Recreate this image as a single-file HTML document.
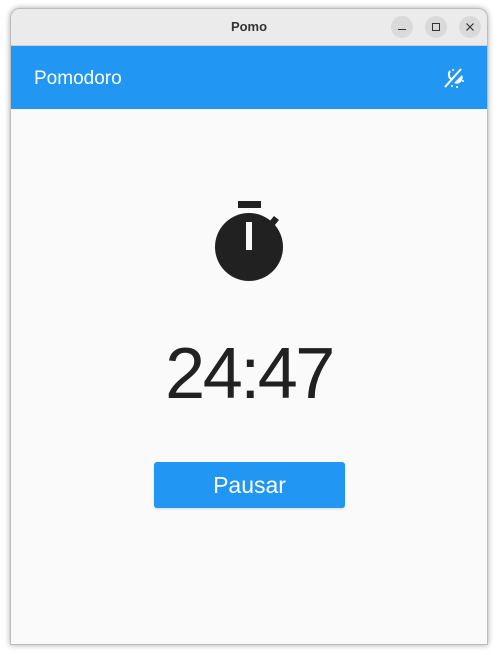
<!DOCTYPE html>
<html><head><style>
html,body{margin:0;padding:0;width:498px;height:655px;background:#fff;overflow:hidden;font-family:"Liberation Sans",sans-serif}
.win{position:absolute;left:10px;top:8px;width:478px;height:637px;border-radius:10px 10px 0 0;overflow:hidden;background:#fafafa;box-shadow:0 0 6px rgba(0,0,0,.35);border:1px solid #bdbdbd;box-sizing:border-box}
.tb{position:absolute;left:0;top:0;right:0;height:36px;background:#ebebeb;border-bottom:1px solid #cfcfcf}
.tt{position:absolute;left:0;right:0;top:10px;text-align:center;font-weight:bold;font-size:13px;color:#333}
.btn{position:absolute;top:7px;width:22px;height:22px;border-radius:50%;background:#dadada}
.ab{position:absolute;left:0;right:0;top:37px;height:63px;background:#2196f3}
.ab span{position:absolute;left:23px;top:22px;color:#fff;font-size:19px}
.time{position:absolute;left:0;right:0;top:324px;text-align:center;font-size:72px;letter-spacing:-2.5px;color:#212121}
.pb{position:absolute;left:143px;top:453px;width:191px;height:46px;background:#2196f3;border-radius:3px;color:#fff;font-size:23px;text-align:center;line-height:46px;box-shadow:0 1px 2px rgba(0,0,0,.15)}
</style></head><body>
<div class="win">
<div class="tb"><div class="tt">Pomo</div>
<div class="btn" style="left:380px"><div style="position:absolute;left:7px;top:13px;width:8px;height:1px;background:#333"></div></div>
<div class="btn" style="left:414px"><div style="position:absolute;left:7px;top:7px;width:6px;height:6px;border:1px solid #333"></div></div>
<div class="btn" style="left:448px"><svg width="22" height="22" style="position:absolute;left:0;top:0"><path d="M7.5 7.5L14.5 14.5M14.5 7.5L7.5 14.5" stroke="#333" stroke-width="1.2"/></svg></div>
</div>
<div class="ab"><span>Pomodoro</span>
<svg width="24" height="24" style="position:absolute;left:430px;top:20px" viewBox="0 0 24 24"><path d="M4 21L20 3" stroke="#fff" stroke-width="2"/><path d="M9 5a6 6 0 0 0 1 8" stroke="#fff" stroke-width="2" fill="none"/><path d="M13 17a6 6 0 0 0 8-8z" fill="#fff"/><circle cx="12" cy="4" r="1" fill="#fff"/><circle cx="22" cy="15" r="1" fill="#fff"/><circle cx="16" cy="21" r="1" fill="#fff"/><circle cx="11" cy="20" r="1" fill="#fff"/></svg></div>
<svg width="80" height="90" style="position:absolute;left:198px;top:186px" viewBox="0 0 80 90">
<rect x="29" y="6" width="23" height="7" fill="#212121"/>
<circle cx="40" cy="52" r="34" fill="#212121"/>
<path d="M60 27l5-6 5 4-5 6z" fill="#212121"/>
<rect x="37" y="27" width="6" height="28" fill="#fafafa"/>
</svg>
<div class="time">24:47</div>
<div class="pb">Pausar</div>
</div>
</body></html>
